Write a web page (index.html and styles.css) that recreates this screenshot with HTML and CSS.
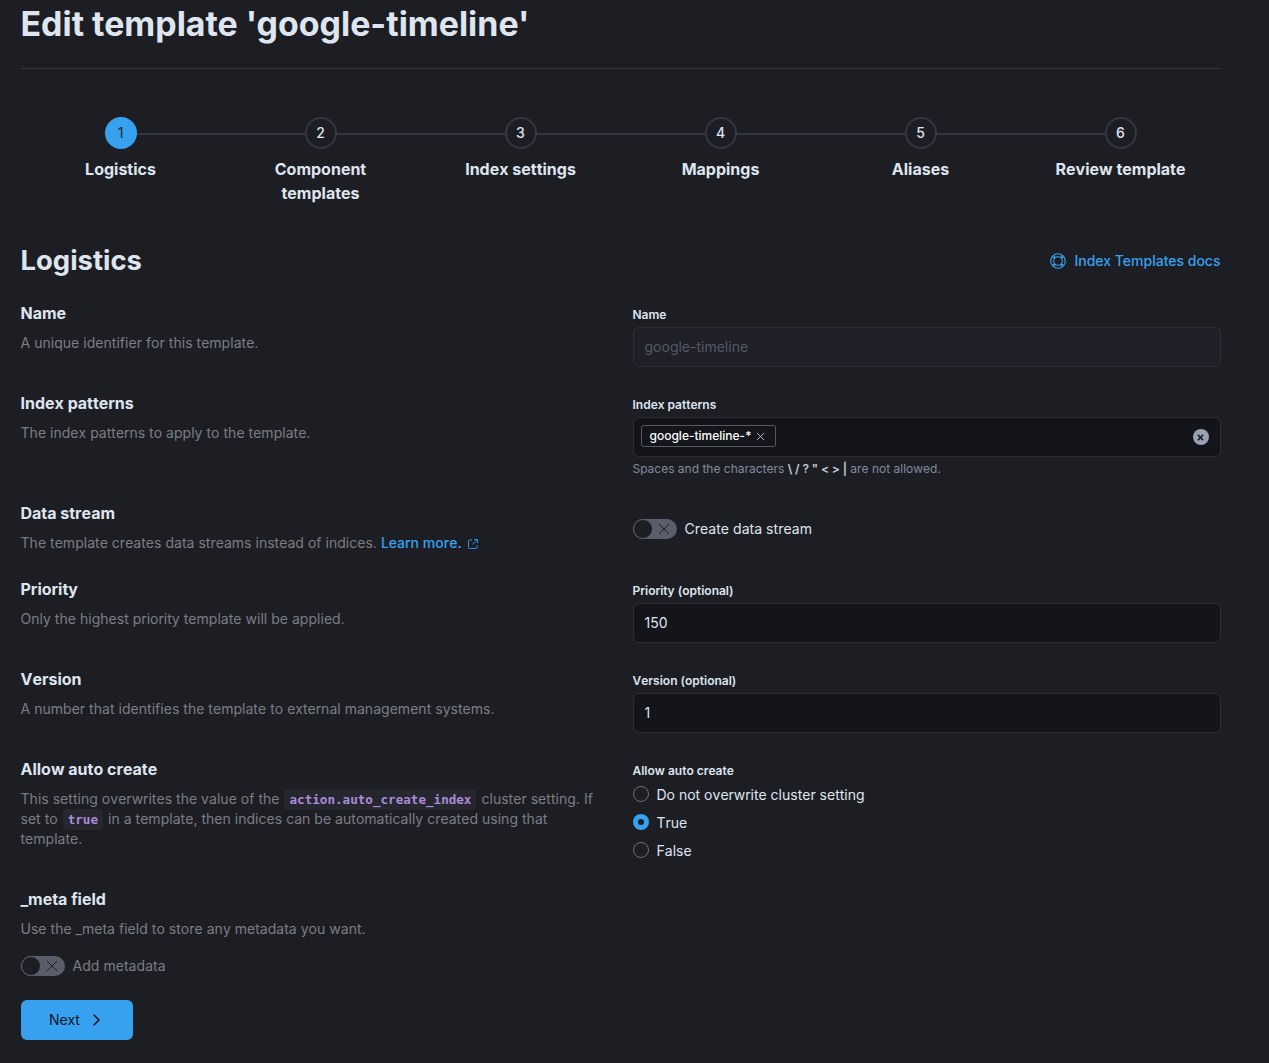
FILE: index.html
```html
<!DOCTYPE html>
<html lang="en">
<head>
<meta charset="utf-8">
<title>Edit template</title>
<link rel="stylesheet" href="styles.css">
</head>
<body>
<main class="page">
  <h1 class="title">Edit template 'google-timeline'</h1>
  <hr class="divider">
  <ol class="steps">
    <li class="step current"><span class="num">1</span><span class="step-label">Logistics</span></li>
    <li class="step"><span class="num">2</span><span class="step-label">Component templates</span></li>
    <li class="step"><span class="num">3</span><span class="step-label">Index settings</span></li>
    <li class="step"><span class="num">4</span><span class="step-label">Mappings</span></li>
    <li class="step"><span class="num">5</span><span class="step-label">Aliases</span></li>
    <li class="step"><span class="num">6</span><span class="step-label">Review template</span></li>
  </ol>
  <header class="section-head">
    <h2 class="section-title">Logistics</h2>
    <a class="docs link" href="#">
      <svg class="docs-icon" viewBox="0 0 16 16" fill="none" stroke="currentColor" stroke-width="1.100"><circle cx="8" cy="8" r="7.300"/><circle cx="8" cy="8" r="4.300"/><path d="M2.500 3.700 5 5.500M3.700 2.500 5.500 5M13.500 3.700 11 5.500M12.300 2.500 10.500 5M2.500 12.300 5 10.500M3.700 13.500 5.500 11M13.500 12.300 11 10.500M12.300 13.500 10.500 11"/></svg>
      Index Templates docs
    </a>
  </header>

  <section class="row">
    <div class="info"><h3>Name</h3><p>A unique identifier for this template.</p></div>
    <div class="control">
      <div class="label">Name</div>
      <div class="field disabled">google-timeline</div>
    </div>
  </section>

  <section class="row">
    <div class="info"><h3>Index patterns</h3><p>The index patterns to apply to the template.</p></div>
    <div class="control">
      <div class="label">Index patterns</div>
      <div class="field combo">
        <span class="pill">google-timeline-*
          <svg class="pill-x" viewBox="0 0 10 10" fill="none" stroke="currentColor" stroke-width="1"><path d="M1 1l8 8M9 1l-8 8"/></svg>
        </span>
        <span class="clear"><svg viewBox="0 0 8 8" fill="none" stroke="currentColor" stroke-width="1.800"><path d="M1 1l6 6M7 1 1 7"/></svg></span>
      </div>
      <div class="help">Spaces and the characters <b>\ / ? " &lt; &gt; |</b> are not allowed.</div>
    </div>
  </section>

  <section class="row">
    <div class="info"><h3>Data stream</h3><p>The template creates data streams instead of indices. <a class="link strong" href="#">Learn more.</a>
      <svg class="ext" viewBox="0 0 12 12" fill="none" stroke="#2f8fd6" stroke-width="1"><path d="M5 2H2.500A1 1 0 0 0 1.500 3v6.500a1 1 0 0 0 1 1H9a1 1 0 0 0 1-1V7M7 1.500h3.500V5M10.500 1.500 5.500 6.500"/></svg></p></div>
    <div class="control toggle-wrap">
      <div class="switch-line">
        <span class="switch"><span class="knob"></span><svg class="switch-x" viewBox="0 0 12 12" fill="none" stroke="currentColor" stroke-width="1"><path d="M1 1l10 10M11 1 1 11"/></svg></span>
        <span class="switch-text">Create data stream</span>
      </div>
    </div>
  </section>

  <section class="row">
    <div class="info"><h3>Priority</h3><p>Only the highest priority template will be applied.</p></div>
    <div class="control">
      <div class="label">Priority (optional)</div>
      <div class="field">150</div>
    </div>
  </section>

  <section class="row">
    <div class="info"><h3>Version</h3><p>A number that identifies the template to external management systems.</p></div>
    <div class="control">
      <div class="label">Version (optional)</div>
      <div class="field">1</div>
    </div>
  </section>

  <section class="row">
    <div class="info"><h3>Allow auto create</h3><p>This setting overwrites the value of the <code>action.auto_create_index</code> cluster setting. If set to <code>true</code> in a template, then indices can be automatically created using that template.</p></div>
    <div class="control radios">
      <div class="label">Allow auto create</div>
      <div class="radio-list">
        <div class="radio-item"><span class="radio"></span><span class="radio-text">Do not overwrite cluster setting</span></div>
        <div class="radio-item"><span class="radio on"></span><span class="radio-text">True</span></div>
        <div class="radio-item"><span class="radio"></span><span class="radio-text">False</span></div>
      </div>
    </div>
  </section>

  <section class="row meta">
    <div class="info">
      <h3>_meta field</h3><p>Use the _meta field to store any metadata you want.</p>
      <div class="switch-line meta-switch">
        <span class="switch"><span class="knob"></span><svg class="switch-x" viewBox="0 0 12 12" fill="none" stroke="currentColor" stroke-width="1"><path d="M1 1l10 10M11 1 1 11"/></svg></span>
        <span class="switch-text dim">Add metadata</span>
      </div>
    </div>
  </section>

  <button class="next" type="button">Next
    <svg class="chev" viewBox="0 0 7 12" fill="none" stroke="currentColor" stroke-width="1.500"><path d="M.7.7 6 6 .7 11.300"/></svg>
  </button>
</main>
</body>
</html>
```
FILE: styles.css
```css
* { box-sizing: border-box; }
html, body { margin: 0; height: 100%; }
body {
  background: #1d1e24;
  color: #dfe5ef;
  font-family: Inter, "Liberation Sans", sans-serif;
  font-size: 14px;
  line-height: 20px;
  overflow: hidden;
  font-kerning: none;
}
.page { width: 1220.500px; padding: 4px 0 0 20.500px; }
.title {
  margin: 0;
  font-size: 33.900px;
  line-height: 40px;
  font-weight: 700;
  color: #dfe5ef;
  font-kerning: normal;
}
.divider { border: 0; height: 1px; background: #343741; margin: 24px 0 48px; }
.steps {
  list-style: none;
  margin: 0 0 38px;
  padding: 0;
  display: grid;
  grid-template-columns: repeat(6, 1fr);
}
.step {
  position: relative;
  display: flex;
  flex-direction: column;
  align-items: center;
  text-align: center;
  gap: 8px;
}
.step::before {
  content: "";
  position: absolute;
  top: 16px;
  left: 50%;
  width: 100%;
  height: 2px;
  background: #343741;
}
.step:last-child::before { display: none; }
.num {
  position: relative;
  width: 32px;
  height: 32px;
  border-radius: 50%;
  border: 2px solid #343741;
  background: #1d1e24;
  display: flex;
  align-items: center;
  justify-content: center;
  font-size: 14px;
  font-weight: 500;
  color: #dfe5ef;
}
.current .num { background: #36a2ef; border-color: #36a2ef; color: #1d1e24; font-weight: 400; }
.step-label {
  width: 140px;
  font-size: 16px;
  line-height: 24px;
  font-weight: 700;
}
.section-head {
  display: flex;
  justify-content: space-between;
  align-items: center;
  height: 36px;
  margin-bottom: 22px;
}
.section-title { margin: 0 0 2px; font-size: 27.430px; line-height: 34px; font-weight: 700; font-kerning: normal; }
.link { color: #36a2ef; text-decoration: none; }
.strong { font-weight: 500; }
.docs { display: flex; align-items: center; gap: 8px; font-weight: 500; font-size: 14px; font-kerning: normal; }
.docs-icon { width: 16px; height: 16px; }
.row {
  display: grid;
  grid-template-columns: 576px 588px;
  column-gap: 36px;
  margin-bottom: 24px;
}
.info h3 {
  margin: 0 0 8px;
  font-size: 16px;
  line-height: 24px;
  font-weight: 700;
  color: #dfe5ef;
}
.info p { margin: 0; color: #7b7d84; font-size: 14px; line-height: 20px; letter-spacing: .03px; }
.ext { width: 12px; height: 12px; margin-left: 1px; vertical-align: -2px; }
code {
  font-family: "DejaVu Sans Mono", "Liberation Mono", monospace;
  font-size: 12.600px;
  line-height: 1;
  font-weight: 700;
  letter-spacing: 0;
  color: #a98bd8;
  background: #25262e;
  padding: 3px 5px;
  margin: 0 1px;
  border-radius: 4px;
}
.control { padding-top: 4px; }
.label { font-size: 12px; line-height: 19px; font-weight: 600; margin-bottom: 3px; }
.field {
  height: 40px;
  background: #14151a;
  border: 1px solid #2c2e36;
  border-radius: 6px;
  padding: 0 11px;
  display: flex;
  align-items: center;
  color: #dfe5ef;
}
.field.disabled { background: #1f2027; color: #535966; }
.combo { position: relative; padding: 0 7px; }
.pill {
  display: inline-flex;
  align-items: center;
  gap: 5px;
  height: 22px;
  padding: 0 10px 0 8px;
  border: 1px solid #545861;
  border-radius: 3px;
  font-size: 12px;
  font-weight: 500;
  color: #fff;
  margin-top: -2px;
}
.pill-x { width: 9px; height: 9px; color: #c5ccd8; }
.clear {
  position: absolute;
  right: 11px;
  top: 11px;
  width: 16px;
  height: 16px;
  border-radius: 50%;
  background: #98a2b3;
  color: #1d1e24;
  display: flex;
  align-items: center;
  justify-content: center;
}
.clear svg { width: 7px; height: 7px; }
.help { margin-top: 4px; font-size: 12px; line-height: 16px; color: #808a9a; }
.help b { color: #c5ccd8; font-weight: 600; font-size: 12px; letter-spacing: -.1px; }
.toggle-wrap { padding-top: 18px; }
.switch-line { display: flex; align-items: center; gap: 8px; }
.switch {
  position: relative;
  flex: none;
  width: 44px;
  height: 20px;
  border-radius: 10px;
  background: #5a5e6a;
  display: flex;
  align-items: center;
}
.knob {
  width: 20px;
  height: 20px;
  border-radius: 50%;
  background: #1d1e24;
  border: 1px solid #5a5e6a;
}
.switch-x { width: 12px; height: 12px; margin-left: 5px; color: #1d1e24; }
.switch-text { font-size: 14px; letter-spacing: .05px; }
.dim { color: #7b7d84; }
.radios { padding-bottom: 3px; }
.radio-list { display: flex; flex-direction: column; gap: 8px; margin-top: 4px; }
.radio-item { display: flex; align-items: center; gap: 8px; height: 20px; }
.radio-text { padding-top: 2px; }
.radio {
  flex: none;
  width: 16px;
  height: 16px;
  border-radius: 50%;
  border: 1px solid #6a6e78;
}
.radio.on { border: 0; background: #36a2ef; display: flex; align-items: center; justify-content: center; }
.radio.on::after { content: ""; width: 6px; height: 6px; border-radius: 50%; background: #1d1e24; }
.meta { margin-bottom: 24px; }
.meta-switch { margin-top: 17px; }
.next {
  width: 112px;
  height: 40px;
  background: #36a2ef;
  border: 0;
  border-radius: 6px;
  color: #07101f;
  font: 400 14px/20px Inter, "Liberation Sans", sans-serif;
  display: flex;
  align-items: center;
  gap: 13px;
  padding: 0 0 0 28.500px;
}
.chev { width: 7px; height: 12px; }
```
